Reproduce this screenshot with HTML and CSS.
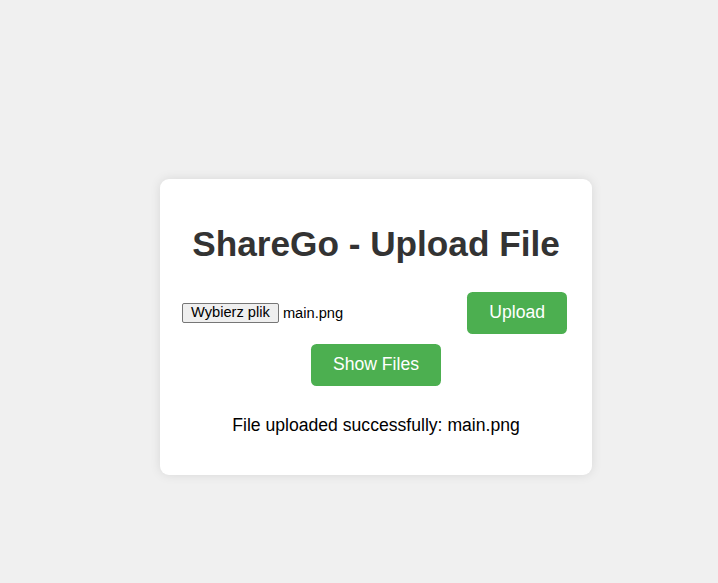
FILE: index.html
```html
<!DOCTYPE html>
<html lang="pl">
<head>
<meta charset="utf-8">
<title>ShareGo - Upload File</title>
<link rel="stylesheet" href="styles.css">
</head>
<body>
  <main class="card">
    <h1 class="title">ShareGo - Upload File</h1>
    <form class="upload-row">
      <label class="file-input">
        <span class="file-button">Wybierz plik</span>
        <span class="file-name">main.png</span>
      </label>
      <button type="button" class="btn">Upload</button>
    </form>
    <button type="button" class="btn show-btn">Show Files</button>
    <p class="message">File uploaded successfully: main.png</p>
  </main>
</body>
</html>
```
FILE: styles.css
```css
html, body {
  margin: 0;
  height: 100%;
}
body {
  box-sizing: border-box;
  background: #f0f0f0;
  font-family: "Liberation Sans", Arial, sans-serif;
  display: flex;
  justify-content: center;
  align-items: center;
  padding-left: 34px;
  padding-top: 70px;
}
.card {
  box-sizing: border-box;
  width: 432px;
  padding: 22px;
  background: #fff;
  border-radius: 9px;
  box-shadow: 0 0 11px rgba(0, 0, 0, 0.1);
  text-align: center;
}
.title {
  margin: 23px 0 28px;
  font-size: 35.2px;
  font-weight: bold;
  color: #333;
  line-height: 40px;
}
.upload-row {
  display: flex;
  justify-content: space-between;
  align-items: center;
  margin: 0 3px 10px 0;
}
.file-input {
  display: flex;
  align-items: center;
  gap: 4px;
  font-size: 14.67px;
  color: #000;
}
.file-button {
  display: inline-block;
  box-sizing: border-box;
  height: 20px;
  line-height: 17px;
  padding: 0 8px;
  background: #efefef;
  border: 1px solid #767676;
  border-radius: 2px;
  color: #000;
}
.btn {
  box-sizing: border-box;
  height: 42px;
  padding: 0 22px;
  border: none;
  border-radius: 5.5px;
  background: #4caf50;
  color: #fff;
  font-family: "Liberation Sans", Arial, sans-serif;
  font-size: 17.6px;
  cursor: pointer;
}
.show-btn {
  display: block;
  margin: 0 auto;
}
.message {
  margin: 29px 0 18px;
  font-size: 17.6px;
  line-height: 20px;
  color: #000;
}
```
